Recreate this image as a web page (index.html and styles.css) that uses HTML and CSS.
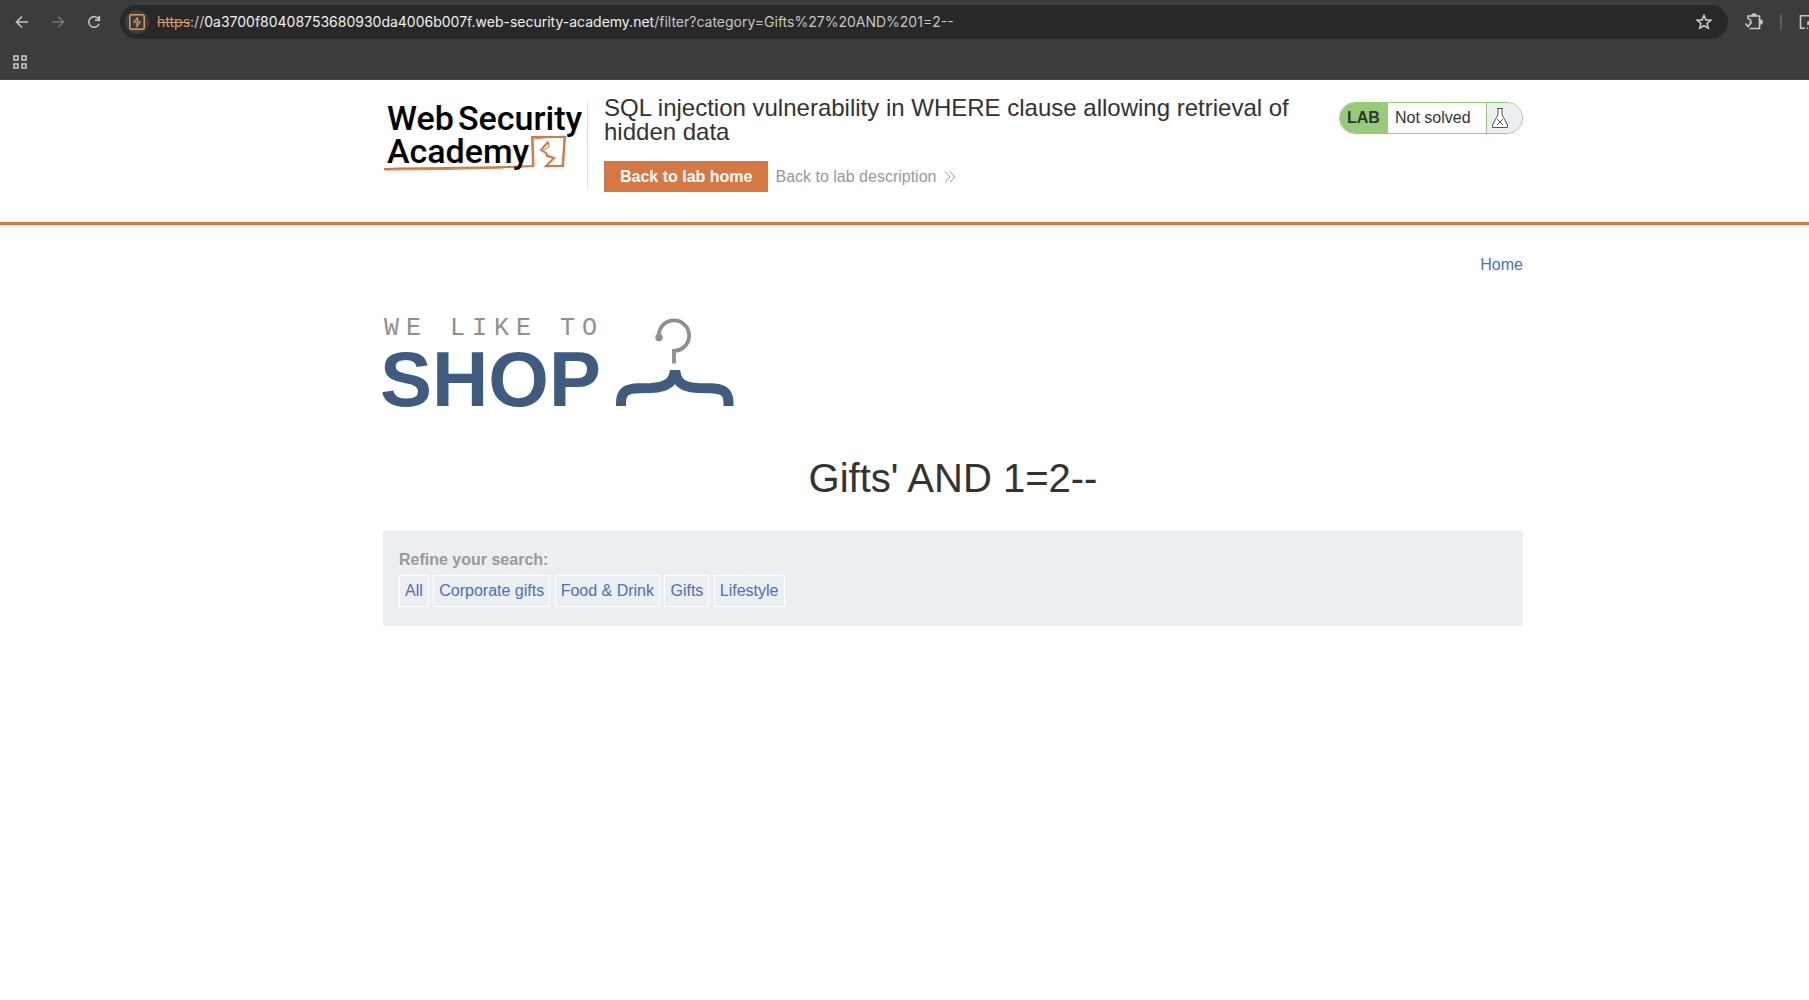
FILE: index.html
```html
<!DOCTYPE html>
<html lang="en">
<head>
<meta charset="utf-8">
<title>SQL injection vulnerability in WHERE clause allowing retrieval of hidden data</title>
<link rel="stylesheet" href="styles.css">
</head>
<body>
<div class="browser">
  <div class="toolbar">
    <div class="nav-buttons">
      <button class="icon-button" aria-label="Back"><svg width="14" height="14" viewBox="0 0 14 14"><path d="M13 7H2M7 1.500L1.500 7L7 12.500"/></svg></button>
      <button class="icon-button dim" aria-label="Forward"><svg width="14" height="14" viewBox="0 0 14 14"><path d="M1 7H12M7 1.500L12.500 7L7 12.500"/></svg></button>
      <button class="icon-button" aria-label="Reload"><svg width="14" height="14" viewBox="0 0 14 14"><path d="M12 9A5.300 5.300 0 1 1 11.500 4M12.300 1V5.200H8"/></svg></button>
    </div>
    <div class="omnibox">
      <span class="site-badge"><svg width="16" height="16" viewBox="0 0 16 16"><rect x="0.750" y="0.750" width="14.500" height="14.500" rx="2"/><path class="bolt" d="M8.500 3.500L5 8L8 8.500M8.500 3.500V7.500L11 8L8 12.500V8.500"/></svg></span>
      <div class="url"><span class="scheme">https</span>://<span class="host">0a3700f80408753680930da4006b007f.web-security-academy.net</span>/filter?category=Gifts%27%20AND%201=2--</div>
      <button class="icon-button" aria-label="Bookmark"><svg width="16" height="16" viewBox="0 0 16 16"><path d="M8 1.500L9.900 5.900L14.700 6.300L11.100 9.500L12.200 14.200L8 11.700L3.800 14.200L4.900 9.500L1.300 6.300L6.100 5.900Z"/></svg></button>
    </div>
    <div class="extensions">
      <button class="icon-button" aria-label="Extensions"><svg width="18" height="18" viewBox="0 0 18 18"><path d="M3 6V3H14.500V15.500H4.500M3 5.500C6.500 6.500 6.500 8.500 4.500 10M0.500 10.500L3 13.500L6.500 9.500"/><path d="M7 2.500A2 1.500 0 0 1 11 2.500ZM15 7A2 2 0 0 1 15 11Z" fill="currentColor"/></svg></button>
      <span class="separator"></span>
      <button class="icon-button" aria-label="Side panel"><svg width="16" height="16" viewBox="0 0 16 16"><path d="M6 14.200H1.500V1.800H14.500V6M8 14.200H9M9 8L13 12M9 7.500V11M9 8H12"/></svg></button>
    </div>
  </div>
  <div class="bookmarks">
    <button class="icon-button" aria-label="Apps"><svg width="14" height="14" viewBox="0 0 14 14"><path d="M1 1H5V5H1ZM9 1H13V5H9ZM1 9H5V13H1ZM9 9H13V13H9Z"/></svg></button>
  </div>
</div>

<header class="lab-header">
  <div class="container lab-bar">
    <div class="academy-logo">
      <svg width="204" height="86" viewBox="0 0 204 86" role="img" aria-label="Web Security Academy">
        <g class="logo-line">
          <path d="M1 67C30 65 100 67 150 64L149 35L182 35L180 64L163 64L171 56L164 54L163 51L158 48L165 40" />
          <path class="thin" d="M2 68Q60 68 120 66M150 36L151 64M150 37L181 34M181 36L179 65M163 65L180 63M171 56L163 52M159 49L166 45L165 39"/>
        </g>
        <g class="logo-text">
          <text x="4" y="28">Web</text><text x="75" y="28">Security</text>
          <text x="4" y="61">Academy</text>
        </g>
      </svg>
    </div>
    <div class="lab-title">
      <h2>SQL injection vulnerability in WHERE clause allowing retrieval of hidden data</h2>
      <div class="lab-links">
        <a class="button-orange" href="#home">Back to lab home</a>
        <a class="link-back" href="#description">Back to lab description <svg width="12" height="12" viewBox="0 0 12 12"><path d="M1 0.500L6 6L1 11.500M6 0.500L11 6L6 11.500"/></svg></a>
      </div>
    </div>
    <div class="lab-status">
      <span class="lab-tag">LAB</span>
      <span class="lab-state">Not solved</span>
      <span class="lab-flask"><svg width="16" height="20" viewBox="0 0 16 20"><path class="glass" d="M5 0.500H11M6 0.500V6.500L4.500 9.500L0.500 17V19.500H15.500V17L11.500 9.500L10 6.500V0.500"/><path d="M5 11L11 17M11 11L5 17"/></svg></span>
    </div>
  </div>
</header>

<main class="container">
  <nav class="top-links"><a href="#home">Home</a></nav>
  <svg class="shop-logo" width="352" height="89" viewBox="0 0 352 89" role="img" aria-label="We like to shop">
    <text class="shop-small" x="1" y="16">WE LIKE TO</text>
    <text class="shop-big" x="-3" y="87">SHOP</text>
    <circle cx="276" cy="18.500" r="3.700" fill="#8f8f8f"/>
    <path d="M275.800 18A15.200 15.200 0 1 1 291 31.800V44.500" fill="none" stroke="#8f8f8f" stroke-width="3.800"/>
    <path d="M238 87V84C238 72 244 69.500 256 69.200L268 69C282 68.500 291 64 292 51.500C293 64 301 68.500 315 69L327 69.200C339 69.500 345.500 72 345.500 84V87" fill="none" stroke="#3f5c80" stroke-width="10" stroke-linejoin="bevel"/>
    <path d="M287 51.500H297L299 60L292 62L285 60Z" fill="#3f5c80"/>
  </svg>
  <h1>Gifts' AND 1=2--</h1>
  <section class="filters">
    <strong>Refine your search:</strong>
    <nav class="filter-list">
      <a href="#all">All</a>
      <a href="#corporate">Corporate gifts</a>
      <a href="#food">Food &amp; Drink</a>
      <a href="#gifts">Gifts</a>
      <a href="#lifestyle">Lifestyle</a>
    </nav>
  </section>
</main>
</body>
</html>
```
FILE: styles.css
```css
* { box-sizing: border-box; }
body {
  margin: 0;
  background: #fff;
  color: #333332;
  font: 16px/20px "Liberation Sans", Arial, sans-serif;
  overflow-x: hidden;
}
a { color: #4a6fbd; text-decoration: none; }
svg { display: block; flex: none; }

.browser {
  height: 80px;
  background: #3c3c3c;
  border-bottom: 1px solid #4a4a4a;
  color: #c7c7c7;
  overflow: hidden;
}
.toolbar { display: flex; align-items: center; padding-top: 5px; }
.icon-button {
  display: flex;
  flex: none;
  padding: 0;
  border: 0;
  background: none;
  color: inherit;
}
.icon-button svg { fill: none; stroke: currentColor; stroke-width: 1.6; }
.dim { color: #757575; }
.nav-buttons { display: flex; gap: 22px; width: 120px; padding-left: 15px; }
.omnibox {
  display: flex;
  align-items: center;
  flex: 1;
  height: 34px;
  padding: 0 16px 0 5px;
  border-radius: 17px;
  background: #282828;
}
.site-badge {
  display: flex;
  align-items: center;
  justify-content: center;
  width: 24px;
  height: 24px;
  border-radius: 50%;
  background: #3c3c3c;
}
.site-badge svg { fill: none; stroke: #dc9768; stroke-width: 1.5; }
.site-badge .bolt { stroke-width: 1.2; }
.url {
  flex: 1;
  padding-left: 8px;
  font: 400 14px/20px Inter, sans-serif;
  white-space: nowrap;
}
.scheme { color: #dc9768; text-decoration: line-through; }
.host { color: #f0f0f0; }
.extensions {
  display: flex;
  align-items: center;
  gap: 17px;
  width: 81px;
  padding-left: 17px;
}
.separator { flex: none; width: 2px; height: 16px; background: #5c5c5c; }
.bookmarks { padding: 16px 13px; }

.container { padding: 0 286px 0 383px; }
.lab-header { border-bottom: 3px solid #d67844; }
.lab-bar { display: flex; align-items: flex-start; height: 142px; }
.academy-logo { margin-top: 22px; border-right: 1px solid #e0e0e0; }
.logo-text { font: 500 34px Roboto, sans-serif; fill: #000; }
.logo-line { fill: none; stroke: #d67844; stroke-width: 2; }
.thin { stroke-width: 1; }
.lab-title { flex: 1; padding: 16px 48px 0 16px; }
h2 { margin: 0 0 17px; font-size: 24px; line-height: 24px; font-weight: 400; }
.lab-links { display: flex; align-items: center; gap: 7px; }
.button-orange {
  padding: 6px 16px 5px;
  background: #d67844;
  color: #fff;
  font-weight: 700;
}
.link-back { display: flex; align-items: center; gap: 8px; color: #999; }
.link-back svg { fill: none; stroke: #999; }
.lab-status {
  display: flex;
  width: 184px;
  height: 32px;
  margin-top: 22px;
  border: 1px solid #97cb78;
  border-radius: 16px;
  overflow: hidden;
  line-height: 30px;
}
.lab-tag { width: 48px; padding-left: 7px; background: #97cb78; font-weight: 700; }
.lab-state { flex: 1; padding-left: 7px; }
.lab-flask {
  display: flex;
  align-items: center;
  width: 36px;
  padding-left: 5px;
  border-left: 1px solid #97cb78;
  background: #ebeff2;
}
.lab-flask svg { fill: none; stroke: #555; }
.lab-flask .glass { fill: #fff; }

.top-links { display: flex; justify-content: flex-end; padding-top: 30px; }
.shop-logo { margin-top: 44px; overflow: visible; }
.shop-small { font: 25px "Liberation Mono", "Courier New", monospace; letter-spacing: 7px; fill: #8f8f8f; }
.shop-big { font: 700 78px "Liberation Sans", Arial, sans-serif; fill: #3f5c80; }
h1 { margin: 47px 0 30px; font-size: 40px; line-height: 46px; font-weight: 400; text-align: center; }
.filters { padding: 19px 16px; background: #ebeff2; }
.filters strong { display: block; color: #999; }
.filter-list { margin-top: 5px; }
.filter-list a { display: inline-block; padding: 5px; border: 1px solid #fff; }
```
